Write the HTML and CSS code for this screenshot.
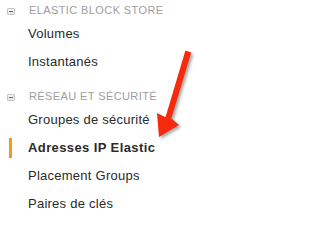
FILE: index.html
```html
<!DOCTYPE html>
<html>
<head>
<meta charset="utf-8">
<link rel="stylesheet" href="styles.css">
</head>
<body>
<nav class="nav">
  <section class="group">
    <div class="group-head"><span class="toggle"></span>ELASTIC BLOCK STORE</div>
    <ul class="items">
      <li class="item">Volumes</li>
      <li class="item">Instantanés</li>
    </ul>
  </section>
  <section class="group group-next">
    <div class="group-head"><span class="toggle"></span>RÉSEAU ET SÉCURITÉ</div>
    <ul class="items">
      <li class="item">Groupes de sécurité</li>
      <li class="item item-active"><span class="marker"></span>Adresses IP Elastic</li>
      <li class="item">Placement Groups</li>
      <li class="item">Paires de clés</li>
    </ul>
  </section>
</nav>
<svg class="callout" width="205" height="217" viewBox="0 0 205 217">
  <path d="M185.4 50.6 L191.2 52.4 L171.3 118.5 L179 125 L159 137 L157 113 L165.5 117.3 Z" fill="#f62a0c"/>
</svg>
</body>
</html>
```
FILE: styles.css
```css
html, body {
  margin: 0;
  padding: 0;
  background: #ffffff;
}
body {
  width: 205px;
  height: 217px;
  overflow: hidden;
  position: relative;
  font-family: "Liberation Sans", Arial, sans-serif;
}
.nav {
  display: flex;
  flex-direction: column;
}
.group-next {
  margin-top: 10px;
}
.group-head {
  height: 20px;
  line-height: 20px;
  font-size: 11px;
  letter-spacing: 0.4px;
  color: #9e9e9e;
  padding-left: 7px;
  white-space: nowrap;
}
.toggle {
  display: inline-block;
  box-sizing: border-box;
  width: 8px;
  height: 7px;
  border: 1px solid #c4c4c4;
  border-radius: 1px;
  background: linear-gradient(#f6f6f6, #e4e4e4);
  vertical-align: -1px;
  margin-right: 14px;
  position: relative;
}
.toggle::after {
  content: "";
  position: absolute;
  left: 1px;
  top: 2px;
  width: 4px;
  height: 1px;
  background: #666;
}
.items {
  list-style: none;
  margin: 0;
  padding: 0;
}
.item {
  display: flex;
  align-items: center;
  height: 28px;
  line-height: 28px;
  font-size: 13px;
  letter-spacing: 0.25px;
  color: #2a2a2a;
  padding-left: 28px;
  white-space: nowrap;
}
.item-active {
  padding-left: 9px;
  font-weight: bold;
  letter-spacing: 0.4px;
  color: #2b2b2b;
}
.marker {
  display: block;
  width: 3px;
  height: 20px;
  background: #f7981d;
  margin-right: 16px;
}
.callout {
  position: absolute;
  left: 0;
  top: 0;
  filter: drop-shadow(2px 2px 1.5px rgba(0, 0, 0, 0.35));
}
```
